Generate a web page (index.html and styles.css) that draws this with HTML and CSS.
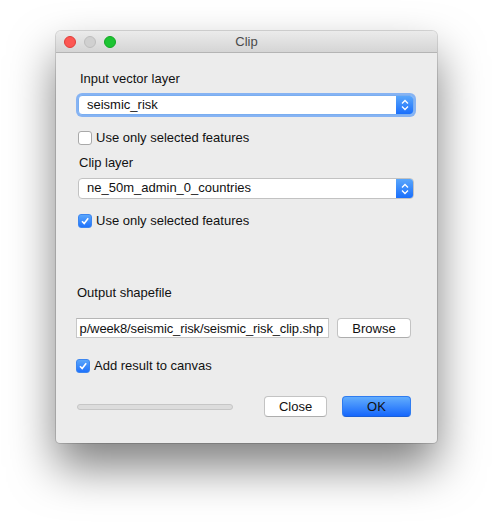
FILE: index.html
```html
<!DOCTYPE html>
<html>
<head>
<meta charset="utf-8">
<link rel="stylesheet" href="styles.css">
</head>
<body>
<div class="window">
  <div class="titlebar">
    <div class="lights">
      <span class="light red"></span>
      <span class="light gray"></span>
      <span class="light green"></span>
    </div>
    <div class="title">Clip</div>
  </div>
  <div class="content">
    <div class="group top">
      <div class="label l1">Input vector layer</div>
      <div class="combo focused">
        <span class="combo-text">seismic_risk</span>
        <span class="combo-btn"><svg width="8" height="12" viewBox="0 0 8 12"><path d="M1 4.5 L4 1.5 L7 4.5 M1 7.5 L4 10.5 L7 7.5" fill="none" stroke="#fff" stroke-width="1.3"/></svg></span>
      </div>
      <div class="check c1"><span class="box"></span><span>Use only selected features</span></div>
      <div class="label l2">Clip layer</div>
      <div class="combo c2">
        <span class="combo-text">ne_50m_admin_0_countries</span>
        <span class="combo-btn"><svg width="8" height="12" viewBox="0 0 8 12"><path d="M1 4.5 L4 1.5 L7 4.5 M1 7.5 L4 10.5 L7 7.5" fill="none" stroke="#fff" stroke-width="1.3"/></svg></span>
      </div>
      <div class="check c2b"><span class="box checked"><svg width="10" height="10" viewBox="0 0 10 10"><path d="M2 5.2 L4.2 7.6 L8.2 2.2" fill="none" stroke="#fff" stroke-width="1.6"/></svg></span><span>Use only selected features</span></div>
    </div>
    <div class="group bottom">
      <div class="label l3">Output shapefile</div>
      <div class="outrow">
        <div class="field"><span class="field-text">p/week8/seismic_risk/seismic_risk_clip.shp</span></div>
        <button class="btn browse">Browse</button>
      </div>
      <div class="check c3"><span class="box checked"><svg width="10" height="10" viewBox="0 0 10 10"><path d="M2 5.2 L4.2 7.6 L8.2 2.2" fill="none" stroke="#fff" stroke-width="1.6"/></svg></span><span>Add result to canvas</span></div>
      <div class="actions">
        <div class="progress"></div>
        <button class="btn close">Close</button>
        <button class="btn ok">OK</button>
      </div>
    </div>
  </div>
</div>
</body>
</html>
```

FILE: styles.css
```css
html, body {
  margin: 0;
  padding: 0;
  background: #ffffff;
}
body {
  min-height: 524px;
  box-sizing: border-box;
  padding: 31px 0 0 56px;
  font-family: "Liberation Sans", Arial, sans-serif;
  font-size: 13px;
  color: #111;
}
.window {
  width: 381px;
  height: 412px;
  box-sizing: border-box;
  background: #ececec;
  border-radius: 5px 5px 4px 4px;
  box-shadow: 0 0 0 1px rgba(0,0,0,0.14), 0 24px 46px rgba(0,0,0,0.5);
  overflow: hidden;
  display: flex;
  flex-direction: column;
}
.titlebar {
  height: 22px;
  box-sizing: border-box;
  background: linear-gradient(#ebebeb, #d5d5d5);
  border-bottom: 1px solid #b4b4b4;
  display: flex;
  align-items: center;
  position: relative;
}
.lights {
  display: flex;
  gap: 8px;
  padding-left: 8px;
}
.light {
  width: 12px;
  height: 12px;
  border-radius: 50%;
  box-sizing: border-box;
}
.red { background: #fc5753; border: 1px solid #df3d38; }
.gray { background: #d0d0d0; border: 1px solid #bdbdbd; }
.green { background: #1dc433; border: 1px solid #13a823; }
.title {
  position: absolute;
  left: 0;
  right: 0;
  text-align: center;
  color: #4a4a4a;
  font-size: 13px;
  line-height: 22px;
  pointer-events: none;
}
.content {
  flex: 1;
  display: flex;
  flex-direction: column;
}
.group.top {
  padding-left: 22px;
  width: 336px;
}
.group.bottom {
  padding-left: 20px;
  width: 335px;
}
.label {
  line-height: 16px;
  height: 16px;
}
.l1 { margin-top: 18px; padding-left: 2px; }
.l2 { margin-top: 9px; padding-left: 1px; }
.l3 { margin-top: 56px; padding-left: 1px; }
.combo {
  height: 20px;
  margin-top: 8px;
  box-sizing: border-box;
  background: #fff;
  border: 1px solid #c2c2c2;
  border-radius: 4px;
  display: flex;
  align-items: stretch;
  overflow: hidden;
}
.combo.focused {
  border-color: #7aaef0;
  box-shadow: 0 0 0 2px rgba(100,160,245,0.75);
}
.combo.c2 {
  height: 21px;
  margin-top: 7px;
}
.combo-text {
  flex: 1;
  padding-left: 8px;
  line-height: 18px;
}
.combo-btn {
  width: 17px;
  background: linear-gradient(#59a6fb, #1a6ffc);
  display: flex;
  align-items: center;
  justify-content: center;
}
.check {
  display: flex;
  align-items: center;
  gap: 4px;
  height: 16px;
  line-height: 16px;
}
.c1 { margin-top: 15px; }
.c2b { margin-top: 14px; }
.c3 { margin-top: 20px; }
.box {
  width: 14px;
  height: 14px;
  box-sizing: border-box;
  border: 1px solid #a9a9a9;
  border-radius: 3px;
  background: #fff;
  display: flex;
  align-items: center;
  justify-content: center;
}
.box.checked {
  background: linear-gradient(#5aa6fb, #1f72fc);
  border-color: #3c86f0;
}
.outrow {
  margin-top: 17px;
  display: flex;
  align-items: center;
  gap: 8px;
}
.field {
  width: 253px;
  height: 20px;
  box-sizing: border-box;
  background: #fff;
  border: 1px solid #c7c7c7;
  border-top-color: #b5b5b5;
  overflow: hidden;
  display: flex;
  justify-content: flex-end;
  align-items: center;
  padding-right: 5px;
  white-space: nowrap;
}
.field-text {
  flex-shrink: 0;
  letter-spacing: -0.12px;
}
.btn {
  font-family: "Liberation Sans", Arial, sans-serif;
  font-size: 13px;
  color: #111;
  height: 21px;
  box-sizing: border-box;
  background: #fff;
  border: 1px solid #c3c3c3;
  border-bottom-color: #adadad;
  border-radius: 4px;
  padding: 0;
  line-height: 19px;
}
.browse {
  width: 74px;
  height: 20px;
}
.actions {
  margin-top: 22px;
  display: flex;
  align-items: center;
}
.progress {
  width: 156px;
  height: 6px;
  box-sizing: border-box;
  margin-left: 1px;
  margin-top: 1px;
  background: #dcdcdc;
  border: 1px solid #c6c6c6;
  border-radius: 3px;
}
.close {
  width: 63px;
  margin-left: 31px;
}
.ok {
  width: 69px;
  margin-left: 15px;
  background: linear-gradient(#62adfd, #1667fc);
  border-color: #2f7cf0;
  border-bottom-color: #1a5fd8;
}
```
